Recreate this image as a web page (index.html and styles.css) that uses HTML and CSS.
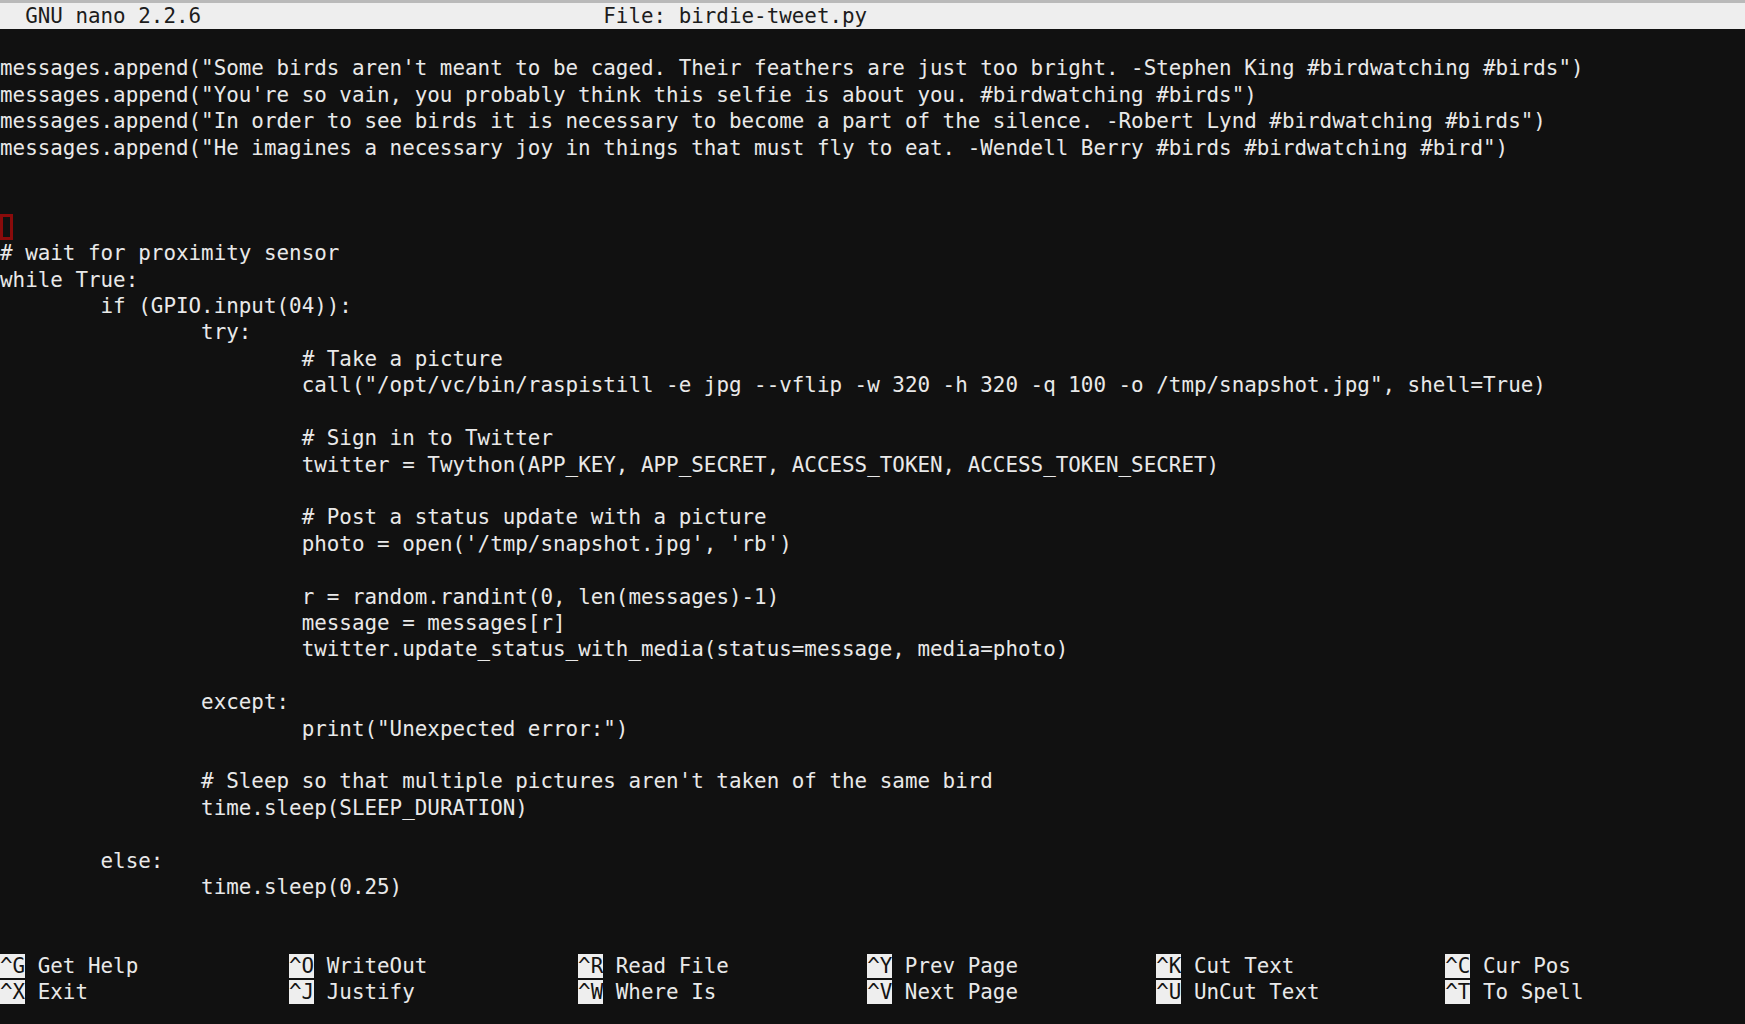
FILE: index.html
```html
<!DOCTYPE html>
<html>
<head>
<meta charset="utf-8">
<link rel="stylesheet" href="styles.css">
<title>GNU nano</title>
</head>
<body>
<div class="term">
  <div class="titlebar"><span class="title-left">  GNU nano 2.2.6</span><span class="title-file">File: birdie-tweet.py</span></div>
  <pre class="editor">

messages.append("Some birds aren't meant to be caged. Their feathers are just too bright. -Stephen King #birdwatching #birds")
messages.append("You're so vain, you probably think this selfie is about you. #birdwatching #birds")
messages.append("In order to see birds it is necessary to become a part of the silence. -Robert Lynd #birdwatching #birds")
messages.append("He imagines a necessary joy in things that must fly to eat. -Wendell Berry #birds #birdwatching #bird")


<span class="cursor"></span>
# wait for proximity sensor
while True:
	if (GPIO.input(04)):
		try:
			# Take a picture
			call("/opt/vc/bin/raspistill -e jpg --vflip -w 320 -h 320 -q 100 -o /tmp/snapshot.jpg", shell=True)

			# Sign in to Twitter
			twitter = Twython(APP_KEY, APP_SECRET, ACCESS_TOKEN, ACCESS_TOKEN_SECRET)

			# Post a status update with a picture
			photo = open('/tmp/snapshot.jpg', 'rb')

			r = random.randint(0, len(messages)-1)
			message = messages[r]
			twitter.update_status_with_media(status=message, media=photo)

		except:
			print("Unexpected error:")

		# Sleep so that multiple pictures aren't taken of the same bird
		time.sleep(SLEEP_DURATION)

	else:
		time.sleep(0.25)</pre>
  <div class="shortcuts">
    <div class="sc"><span class="key">^G</span> Get Help</div>
    <div class="sc"><span class="key">^O</span> WriteOut</div>
    <div class="sc"><span class="key">^R</span> Read File</div>
    <div class="sc"><span class="key">^Y</span> Prev Page</div>
    <div class="sc"><span class="key">^K</span> Cut Text</div>
    <div class="sc"><span class="key">^C</span> Cur Pos</div>
    <div class="sc"><span class="key">^X</span> Exit</div>
    <div class="sc"><span class="key">^J</span> Justify</div>
    <div class="sc"><span class="key">^W</span> Where Is</div>
    <div class="sc"><span class="key">^V</span> Next Page</div>
    <div class="sc"><span class="key">^U</span> UnCut Text</div>
    <div class="sc"><span class="key">^T</span> To Spell</div>
  </div>
</div>
</body>
</html>
```
FILE: styles.css
```css
html, body {
  margin: 0;
  padding: 0;
  background: #111111;
}
body {
  width: 1745px;
  height: 1024px;
  overflow: hidden;
}
.term {
  font-family: "DejaVu Sans Mono", "Liberation Mono", monospace;
  font-size: 20.88px;
  line-height: 26.4px;
  color: #e9e9e9;
  border-top: 3px solid #b9b9b9;
}
.titlebar {
  background: #eeeeee;
  color: #1c1c1c;
  height: 26px;
  line-height: 26px;
  white-space: pre;
  display: flex;
}
.title-left {
  width: 48ch;
  flex: none;
}
.editor {
  margin: 0;
  font: inherit;
  line-height: 26.4px;
  height: 924px;
  tab-size: 8;
  -moz-tab-size: 8;
  white-space: pre;
  overflow: hidden;
}
.cursor {
  display: inline-block;
  width: 1ch;
  height: 26px;
  box-sizing: border-box;
  border: 3px solid #8a0b0b;
  vertical-align: top;
}
.shortcuts {
  display: grid;
  grid-template-columns: repeat(6, 23ch);
  white-space: pre;
}
.sc {
  height: 26.4px;
}
.key {
  background: #eeeeee;
  color: #141414;
}
```
